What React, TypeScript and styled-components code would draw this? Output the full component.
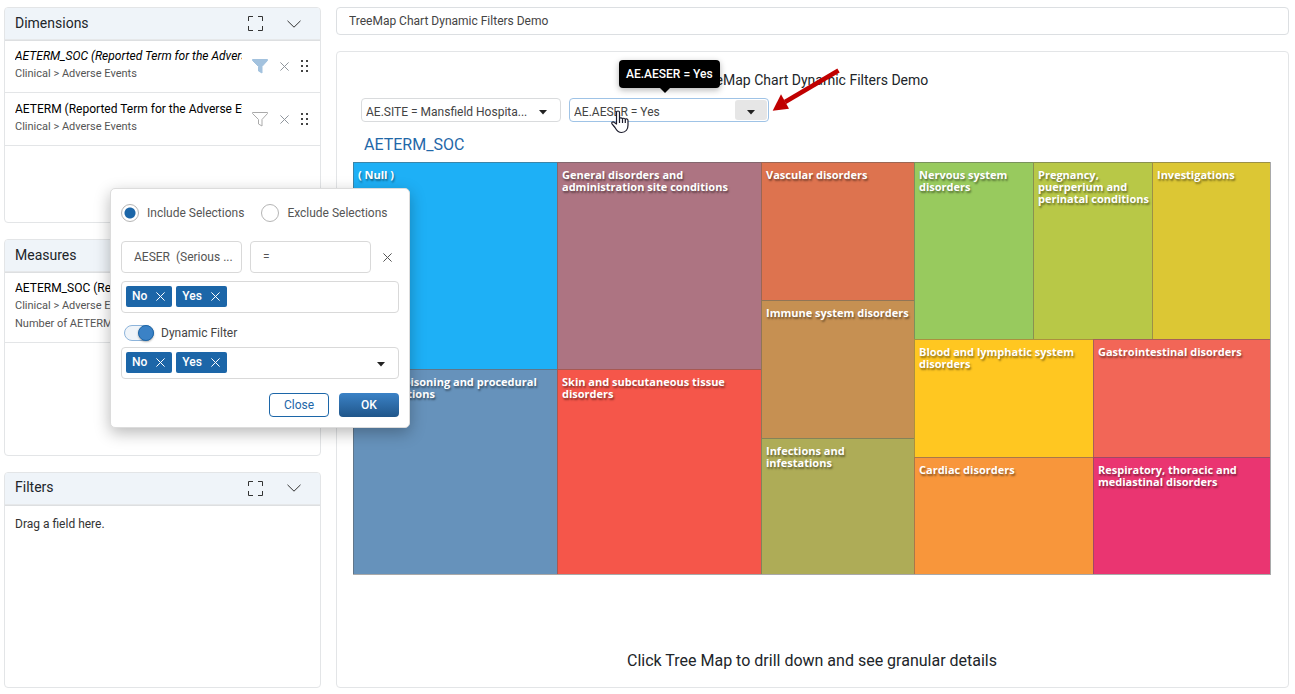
import React from "react";
import styled, { createGlobalStyle, css } from "styled-components";

const GlobalStyle = createGlobalStyle`
  *, *::before, *::after { box-sizing: border-box; }
  body {
    margin: 0;
    background: #fff;
    color: #212529;
    font-family: Roboto, "Liberation Sans", sans-serif;
    font-size: 12px;
  }
  button, input, select { font: inherit; color: inherit; }
  h1, h2, h3, p, ul { margin: 0; padding: 0; font-weight: 400; list-style: none; }
`;

const Page = styled.div`
  position: relative;
  display: grid;
  grid-template-columns: 317px minmax(0, 1fr);
  gap: 15px;
  min-height: 100vh;
  padding: 7px 6px 6px 4px;
`;

/* ---------- sidebar ---------- */

const Sidebar = styled.aside`
  display: flex;
  flex-direction: column;
  gap: 16px;
`;

const Panel = styled.section`
  flex: 1 1 0;
  border: 1px solid #e3e5e7;
  border-radius: 4px;
  overflow: hidden;
`;

const PanelHeader = styled.header`
  display: flex;
  align-items: center;
  height: 32px;
  padding: 0 19px 2px 10px;
  background: #eff4f9;
  border-bottom: 1px solid #e6e8ea;
  box-shadow: 0 1px 0 #dddfe1;
`;

const PanelTitle = styled.h2`
  flex: 1;
  font-size: 14px;
  line-height: 20px;
`;

const IconButton = styled.button`
  display: flex;
  padding: 0;
  border: 0;
  background: none;
  color: ${(p) => p.color || "#333"};
`;

const HeaderActions = styled.div`
  display: flex;
  align-items: center;
  gap: 24px;
  padding-top: 2px;
`;

const FieldRow = styled.li`
  display: flex;
  align-items: center;
  height: 53px;
  padding: 0 11px 0 10px;
  border-bottom: 1px solid #e3e5e7;
`;

const MeasureRow = styled(FieldRow)`
  height: 71px;
`;

const FieldText = styled.div`
  width: 227px;
  padding-bottom: 3px;
  overflow: hidden;
  white-space: nowrap;
`;

const FieldName = styled.p<{ $italic?: boolean }>`
  color: #000;
  font-size: 12px;
  line-height: 18px;
  font-style: ${(p) => (p.$italic ? "italic" : "normal")};
`;

const FieldPath = styled.p`
  color: #555;
  font-size: 11px;
  line-height: 18px;
`;

const RowActions = styled.div`
  display: flex;
  flex: 1;
  align-items: center;
  justify-content: space-between;
  padding: 0 1px 0 10px;
`;

const EmptyText = styled.p`
  padding: 10px;
  color: #333;
  line-height: 18px;
`;

/* ---------- main area ---------- */

const Main = styled.main`
  display: flex;
  flex-direction: column;
  gap: 16px;
`;

const TitleInput = styled.input`
  height: 28px;
  width: 100%;
  padding: 0 12px;
  border: 1px solid #dcdfe2;
  border-radius: 4px;
  color: #444;
`;

const ChartCard = styled.section`
  display: flex;
  flex: 1;
  flex-direction: column;
  padding: 18px 17px 15px 16px;
  border: 1px solid #e3e5e7;
  border-radius: 4px;
`;

const ChartTitle = styled.h1`
  font-size: 14px;
  line-height: 20px;
  text-align: center;
`;

const FilterBar = styled.div`
  display: flex;
  gap: 8px;
  padding: 8px 8px 0;
`;

const SelectWrap = styled.div`
  position: relative;
  width: 200px;
`;

const FilterSelect = styled.select<{ $active?: boolean }>`
  appearance: none;
  display: block;
  width: 100%;
  height: 24px;
  padding: 3px 30px 0 4px;
  border: 1px solid ${(p) => (p.$active ? "#9fc3e6" : "#d9dbdd")};
  border-radius: 4px;
  background: #fff;
  color: #444;
`;

const CaretBox = styled.span<{ $active?: boolean }>`
  position: absolute;
  top: 2px;
  right: 2px;
  bottom: 2px;
  display: flex;
  align-items: center;
  justify-content: center;
  width: 32px;
  padding-top: 4px;
  border-radius: 3px;
  pointer-events: none;
  background: ${(p) => (p.$active ? "#e6e6e6" : "transparent")};
`;

const Tooltip = styled.div`
  position: absolute;
  bottom: 34px;
  left: 50px;
  padding: 0 7px;
  border-radius: 4px;
  background: #000;
  color: #fff;
  font-weight: 500;
  line-height: 28px;
  white-space: nowrap;
  box-shadow: 0 2px 6px rgba(0, 0, 0, 0.3);
  &::after {
    content: "";
    position: absolute;
    top: 100%;
    left: 50%;
    margin-left: -9px;
    border: 5px solid transparent;
    border-top-color: #000;
  }
`;

const HandPointer = styled.svg`
  position: absolute;
  left: 42px;
  top: 12px;
`;

const Callout = styled.svg`
  position: absolute;
  left: 202px;
  bottom: 10px;
`;

const Dimension = styled.h3`
  padding: 13px 11px 7px;
  color: #1f68a8;
  font-size: 16px;
  line-height: 20px;
`;

const line = "rgba(90, 90, 90, 0.5)";

const TreeMap = styled.div`
  display: grid;
  grid-template-columns: 204fr 204fr 153fr 356fr;
  height: 413px;
  border-right: 1px solid #a9a9a9;
  border-bottom: 1px solid #a9a9a9;
`;

const Rows = styled.div<{ $rows: string }>`
  display: grid;
  min-width: 0;
  grid-template-rows: ${(p) => p.$rows};
`;

const Columns = styled.div<{ $cols: string }>`
  display: grid;
  min-height: 0;
  grid-template-columns: ${(p) => p.$cols};
`;

const Tile = styled.div<{ $fill: string }>`
  min-width: 0;
  padding: 6px 2px 6px 4px;
  border-top: 1px solid ${line};
  border-left: 1px solid ${line};
  background: ${(p) => p.$fill};
  color: #fff;
  font-family: "Open Sans", "Noto Sans", sans-serif;
  font-size: 11px;
  font-weight: 670;
  line-height: 12px;
  white-space: pre-line;
  text-shadow: 1px 2px 2px rgba(0, 0, 0, 0.45);
`;

const Footer = styled.p`
  margin-top: auto;
  font-size: 16px;
  line-height: 22px;
  text-align: center;
`;

/* ---------- filter dialog ---------- */

const Dialog = styled.form`
  position: absolute;
  top: 188px;
  left: 110px;
  width: 300px;
  padding: 14px 10px 10px;
  border: 1px solid #dcdcdc;
  border-radius: 5px;
  background: #fff;
  color: #555;
  box-shadow: 0 5px 16px rgba(0, 0, 0, 0.28);
`;

const RadioRow = styled.div`
  display: flex;
  gap: 17px;
  height: 20px;
`;

const RadioLabel = styled.label`
  display: flex;
  align-items: center;
  gap: 8px;
`;

const Radio = styled.input`
  appearance: none;
  width: 18px;
  height: 18px;
  margin: 0;
  border: 1px solid #b5b5b5;
  border-radius: 50%;
  background: #fff;
  &:checked { background: radial-gradient(circle, #1c66a8 5px, #fff 6px); }
`;

const Condition = styled.div`
  display: flex;
  align-items: center;
  gap: 8px;
  margin: 18px 0 8px;
`;

const fieldFrame = css`
  border: 1px solid #d9d9d9;
  border-radius: 4px;
  background: #fff;
`;

const ConditionSelect = styled.select`
  ${fieldFrame}
  appearance: none;
  width: 121px;
  height: 32px;
  padding: 0 8px 0 12px;
`;

const ClearSlot = styled.div`
  padding-left: 4px;
`;

const ChipBox = styled.div`
  ${fieldFrame}
  display: flex;
  align-items: center;
  gap: 4px;
  height: 32px;
  padding: 0 13px 2px 4px;
`;

const Chip = styled.span`
  display: flex;
  align-items: center;
  gap: 9px;
  height: 21px;
  padding: 0 7px 0 6px;
  border-radius: 2px;
  background: #1c66a8;
  color: #fff;
  font-weight: 500;
`;

const ChipCaret = styled.span`
  display: flex;
  margin-left: auto;
  padding-top: 4px;
`;

const SwitchLabel = styled.label`
  display: flex;
  align-items: center;
  gap: 7px;
  height: 18px;
  margin: 11px 0 5px 3px;
  color: #444;
`;

const Switch = styled.input`
  appearance: none;
  position: relative;
  width: 30px;
  height: 16px;
  margin: 0;
  border: 1px solid #8db4db;
  border-radius: 8px;
  background: #eff4f9;
  &::after {
    content: "";
    position: absolute;
    top: -1px;
    right: -1px;
    width: 16px;
    height: 16px;
    border: 1px solid #1c66a8;
    border-radius: 50%;
    background: #3b82c6;
    box-shadow: 0 1px 2px rgba(0, 0, 0, 0.3);
  }
`;

const DialogActions = styled.div`
  display: flex;
  justify-content: flex-end;
  gap: 10px;
  margin-top: 14px;
`;

const ActionButton = styled.button<{ $primary?: boolean }>`
  width: 60px;
  height: 24px;
  padding: 0;
  border: 1px solid #1c66a8;
  border-radius: 4px;
  color: #1c66a8;
  background: #fff;
  ${(p) =>
    p.$primary &&
    css`
      border: 0;
      color: #fff;
      font-weight: 500;
      background: linear-gradient(#3b82c6, #20568a);
    `}
`;

/* ---------- icons ---------- */

const ExpandIcon = () => (
  <svg width="15" height="15" viewBox="0 0 15 15" fill="none" stroke="currentColor">
    <path d="M.5 5V.5H5M10 .5h4.5V5M14.5 10v4.5H10M5 14.5H.5V10" />
  </svg>
);

const ChevronIcon = () => (
  <svg width="14" height="8" viewBox="0 0 14 8" fill="none" stroke="currentColor">
    <path d="M.5.8 7 7.2 13.5.8" />
  </svg>
);

const FunnelIcon = ({ filled }: { filled?: boolean }) => (
  <svg
    width="16"
    height="15"
    viewBox="0 0 16 15"
    fill={filled ? "#a3c2de" : "none"}
    stroke={filled ? "#a3c2de" : "#aaa"}
    strokeLinejoin="round"
  >
    <path d="M.5.5h15v1L10 7.5V14l-3.5-2V7.5L.5 1.5z" />
  </svg>
);

const CrossIcon = () => (
  <svg width="9" height="9" viewBox="0 0 9 9" fill="none" stroke="currentColor">
    <path d="M.4.4l8.2 8.2M8.6.4L.4 8.6" />
  </svg>
);

const GripIcon = () => (
  <svg width="7" height="12" viewBox="0 0 7 12" fill="#444">
    {[0, 5, 10].map((y) => (
      <g key={y}>
        <rect x="0" y={y} width="2" height="2" />
        <rect x="5" y={y} width="2" height="2" />
      </g>
    ))}
  </svg>
);

const CaretIcon = () => (
  <svg width="8" height="5" viewBox="0 0 8 5" fill="#222">
    <path d="M0 0h8L4 4.5z" />
  </svg>
);

/* ---------- composed parts ---------- */

const SidebarPanel = ({ title, children }: { title: string; children: React.ReactNode }) => (
  <Panel>
    <PanelHeader>
      <PanelTitle>{title}</PanelTitle>
      <HeaderActions>
        <IconButton type="button" aria-label={`Expand ${title}`}><ExpandIcon /></IconButton>
        <IconButton type="button" aria-label={`Collapse ${title}`}><ChevronIcon /></IconButton>
      </HeaderActions>
    </PanelHeader>
    {children}
  </Panel>
);

const DimensionField = ({ name, active }: { name: string; active?: boolean }) => (
  <FieldRow>
    <FieldText>
      <FieldName $italic={active}>{name}</FieldName>
      <FieldPath>Clinical &gt; Adverse Events</FieldPath>
    </FieldText>
    <RowActions>
      <IconButton type="button" aria-label="Filter"><FunnelIcon filled={active} /></IconButton>
      <IconButton type="button" aria-label="Remove" color="#8f959c"><CrossIcon /></IconButton>
      <IconButton type="button" aria-label="Reorder"><GripIcon /></IconButton>
    </RowActions>
  </FieldRow>
);

const ValueChip = ({ label }: { label: string }) => (
  <Chip>
    {label}
    <IconButton type="button" aria-label={`Remove ${label}`} color="#fff"><CrossIcon /></IconButton>
  </Chip>
);

const FilterDialog = () => (
  <Dialog onSubmit={(e) => e.preventDefault()}>
    <RadioRow>
      <RadioLabel><Radio type="radio" name="mode" defaultChecked />Include Selections</RadioLabel>
      <RadioLabel><Radio type="radio" name="mode" />Exclude Selections</RadioLabel>
    </RadioRow>
    <Condition>
      <ConditionSelect aria-label="Field"><option>AESER&nbsp; (Serious ...</option></ConditionSelect>
      <ConditionSelect aria-label="Operator"><option>=</option></ConditionSelect>
      <ClearSlot>
        <IconButton type="button" aria-label="Remove condition" color="#555"><CrossIcon /></IconButton>
      </ClearSlot>
    </Condition>
    <ChipBox>
      <ValueChip label="No" />
      <ValueChip label="Yes" />
    </ChipBox>
    <SwitchLabel><Switch type="checkbox" role="switch" defaultChecked />Dynamic Filter</SwitchLabel>
    <ChipBox>
      <ValueChip label="No" />
      <ValueChip label="Yes" />
      <ChipCaret><CaretIcon /></ChipCaret>
    </ChipBox>
    <DialogActions>
      <ActionButton type="button">Close</ActionButton>
      <ActionButton type="submit" $primary>OK</ActionButton>
    </DialogActions>
  </Dialog>
);

export default function App() {
  return (
    <>
      <GlobalStyle />
      <Page>
        <Sidebar>
          <SidebarPanel title="Dimensions">
            <ul>
              <DimensionField name="AETERM_SOC (Reported Term for the Adverse Event)" active />
              <DimensionField name="AETERM (Reported Term for the Adverse Event)" />
            </ul>
          </SidebarPanel>
          <SidebarPanel title="Measures">
            <ul>
              <MeasureRow>
                <FieldText>
                  <FieldName>AETERM_SOC (Reported Term for the Adverse Event)</FieldName>
                  <FieldPath>Clinical &gt; Adverse Events</FieldPath>
                  <FieldPath>Number of AETERM_SOC</FieldPath>
                </FieldText>
              </MeasureRow>
            </ul>
          </SidebarPanel>
          <SidebarPanel title="Filters">
            <EmptyText>Drag a field here.</EmptyText>
          </SidebarPanel>
        </Sidebar>

        <Main>
          <TitleInput aria-label="Chart title" defaultValue="TreeMap Chart Dynamic Filters Demo" />
          <ChartCard>
            <ChartTitle>TreeMap Chart Dynamic Filters Demo</ChartTitle>
            <FilterBar>
              <SelectWrap>
                <FilterSelect aria-label="Site filter">
                  <option>AE.SITE = Mansfield Hospita...</option>
                </FilterSelect>
                <CaretBox><CaretIcon /></CaretBox>
              </SelectWrap>
              <SelectWrap>
                <FilterSelect aria-label="Serious event filter" $active>
                  <option>AE.AESER = Yes</option>
                </FilterSelect>
                <CaretBox $active><CaretIcon /></CaretBox>
                <Tooltip role="tooltip">AE.AESER = Yes</Tooltip>
                <HandPointer width="18" height="24" viewBox="0 0 18 24" fill="#fff" stroke="#1b1b2b" strokeWidth="1.2" strokeLinejoin="round">
                  <path d="M5.5 14V2.5c0-2 3-2 3 0V9c0-1.6 3-1.5 3 .3 0-1.5 2.8-1.4 2.8.5 0-1.3 2.7-1.2 2.7.6V15c0 4-2 7.5-6.5 7.5-4 0-5-2.5-6.5-5L1 13.8c-.8-1.6 1.2-2.6 2.4-1.3z" />
                  <path d="M8.5 9v4M11.5 9.5V13M14.3 10v3" />
                </HandPointer>
                <Callout width="70" height="46" viewBox="0 0 70 46">
                  <path d="M67.5 4.5 14 36" stroke="#c00000" strokeWidth="4.6" fill="none" />
                  <path d="M1.7 44.7 10 28.3l8 14.4z" fill="#c00000" />
                </Callout>
              </SelectWrap>
            </FilterBar>
            <Dimension>AETERM_SOC</Dimension>
            <TreeMap>
              <Rows $rows="207fr 205fr">
                <Tile $fill="#1eb0f6">( Null )</Tile>
                <Tile $fill="#6692bb">Injury, poisoning and procedural complications</Tile>
              </Rows>
              <Rows $rows="207fr 205fr">
                <Tile $fill="#ad7482">General disorders and administration site conditions</Tile>
                <Tile $fill="#f5564a">Skin and subcutaneous tissue disorders</Tile>
              </Rows>
              <Rows $rows="138fr 138fr 136fr">
                <Tile $fill="#dd734f">Vascular disorders</Tile>
                <Tile $fill="#c69052">Immune system disorders</Tile>
                <Tile $fill="#aeac57">{"Infections and\ninfestations"}</Tile>
              </Rows>
              <Rows $rows="177fr 118fr 117fr">
                <Columns $cols="119fr 119fr 118fr">
                  <Tile $fill="#98ca5e">Nervous system disorders</Tile>
                  <Tile $fill="#b8c847">Pregnancy, puerperium and perinatal conditions</Tile>
                  <Tile $fill="#dcc734">Investigations</Tile>
                </Columns>
                <Columns $cols="179fr 177fr">
                  <Tile $fill="#ffc721">Blood and lymphatic system disorders</Tile>
                  <Tile $fill="#f26657">Gastrointestinal disorders</Tile>
                </Columns>
                <Columns $cols="179fr 177fr">
                  <Tile $fill="#f8963b">Cardiac disorders</Tile>
                  <Tile $fill="#ea3571">Respiratory, thoracic and mediastinal disorders</Tile>
                </Columns>
              </Rows>
            </TreeMap>
            <Footer>Click Tree Map to drill down and see granular details</Footer>
          </ChartCard>
        </Main>
        <FilterDialog />
      </Page>
    </>
  );
}
